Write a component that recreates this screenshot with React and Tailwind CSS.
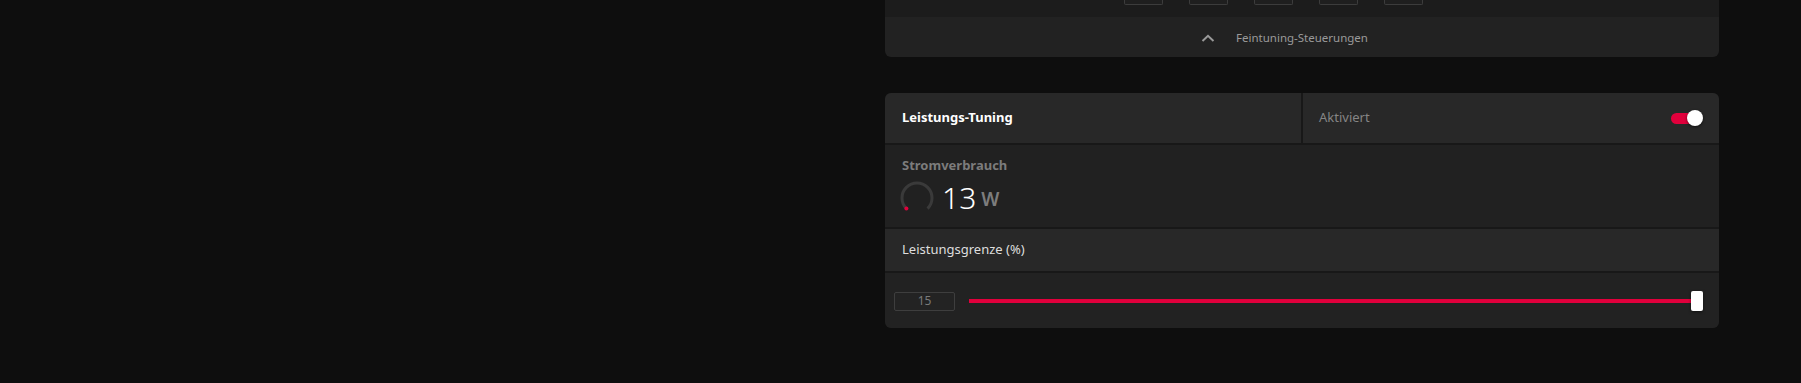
import React from 'react';

const FONT = { fontFamily: '"Noto Sans", "Open Sans", Arial, sans-serif' };

function Gauge() {
  // open ring with a gap at the bottom, red marker at the start of the arc
  return (
    <svg width="34" height="34" viewBox="0 0 34 34" className="shrink-0">
      <path
        d="M 6.4 27.6 A 15 15 0 1 1 27.6 27.6"
        fill="none"
        stroke="#3a3a3a"
        strokeWidth="3"
      />
      <circle cx="6.4" cy="27.6" r="2" fill="#e1003c" />
    </svg>
  );
}

function Toggle() {
  return (
    <div className="relative w-[32px] h-[16px] flex items-center">
      <div className="w-[30px] h-[11px] rounded-full bg-[#e1003c]" />
      <div className="absolute right-0 top-0 w-[16px] h-[16px] rounded-full bg-white shadow-[0_1px_3px_rgba(0,0,0,0.6)]" />
    </div>
  );
}

export default function App() {
  return (
    <div className="w-full h-[383px] bg-[#0e0e0e] overflow-hidden pl-[885px]" style={FONT}>
      <div className="w-[834px]">
        {/* Fine tuning panel (cut off at the top) */}
        <div className="rounded-b-md overflow-hidden">
          <div className="h-[17px] bg-[#1c1c1c] flex pl-[239px] gap-[26px]">
            {[0, 1, 2, 3, 4].map((i) => (
              <div key={i} className="w-[39px] h-[5px] border-x border-b border-[#3c3c3c] rounded-b-[2px] bg-[#1f1f1f]" />
            ))}
          </div>
          <div className="h-[40px] bg-[#222222] flex items-center justify-center pt-[2px]">
            <span className="relative text-[11.5px] text-[#9a9a9a]">
              <svg width="14" height="8" viewBox="0 0 14 8" className="absolute right-full mr-[21px] top-1/2 -translate-y-1/2">
                <path d="M1.5 7 L7 1.8 L12.5 7" fill="none" stroke="#9a9a9a" strokeWidth="2" />
              </svg>
              Feintuning-Steuerungen
            </span>
          </div>
        </div>

        {/* Performance tuning panel */}
        <div className="mt-[36px] rounded-md overflow-hidden bg-[#181818] flex flex-col gap-[2px]">
          <div className="h-[50px] flex gap-[2px]">
            <div className="w-[416px] bg-[#282828] flex items-center pl-[17px]">
              <span className="text-[13px] font-bold text-white">Leistungs-Tuning</span>
            </div>
            <div className="flex-1 bg-[#282828] flex items-center justify-between pl-[16px] pr-[16px]">
              <span className="text-[13px] text-[#858585]">Aktiviert</span>
              <Toggle />
            </div>
          </div>

          <div className="h-[82px] bg-[#212121] pl-[17px] pt-[12px]">
            <div className="text-[13px] font-bold text-[#7c7c7c] leading-[16px]">Stromverbrauch</div>
            <div className="flex items-center mt-[7px] -ml-[2px]">
              <Gauge />
              <span className="ml-[8px] text-[30px] font-light text-white leading-[34px]">13</span>
              <span className="ml-[5px] text-[19px] font-semibold text-[#7d7d7d] leading-[34px] pt-[2px]">W</span>
            </div>
          </div>

          <div className="h-[42px] bg-[#282828] flex items-center pl-[17px]">
            <span className="text-[13px] text-[#dedede]">Leistungsgrenze (%)</span>
          </div>

          <div className="h-[55px] bg-[#222222] flex items-center pl-[9px] pr-[16px] pt-[1px]">
            <div className="w-[61px] h-[19px] border border-[#3e3e3e] rounded-[2px] bg-[#232323] flex items-center justify-center text-[12px] text-[#7a7a7a]">
              15
            </div>
            <div className="flex-1 ml-[14px] flex items-center">
              <div className="flex-1 h-[4px] bg-[#e1003c]" />
              <div className="w-[12px] h-[20px] bg-white rounded-[2px] -ml-px shadow-[0_1px_3px_rgba(0,0,0,0.5)]" />
            </div>
          </div>
        </div>
      </div>
    </div>
  );
}
